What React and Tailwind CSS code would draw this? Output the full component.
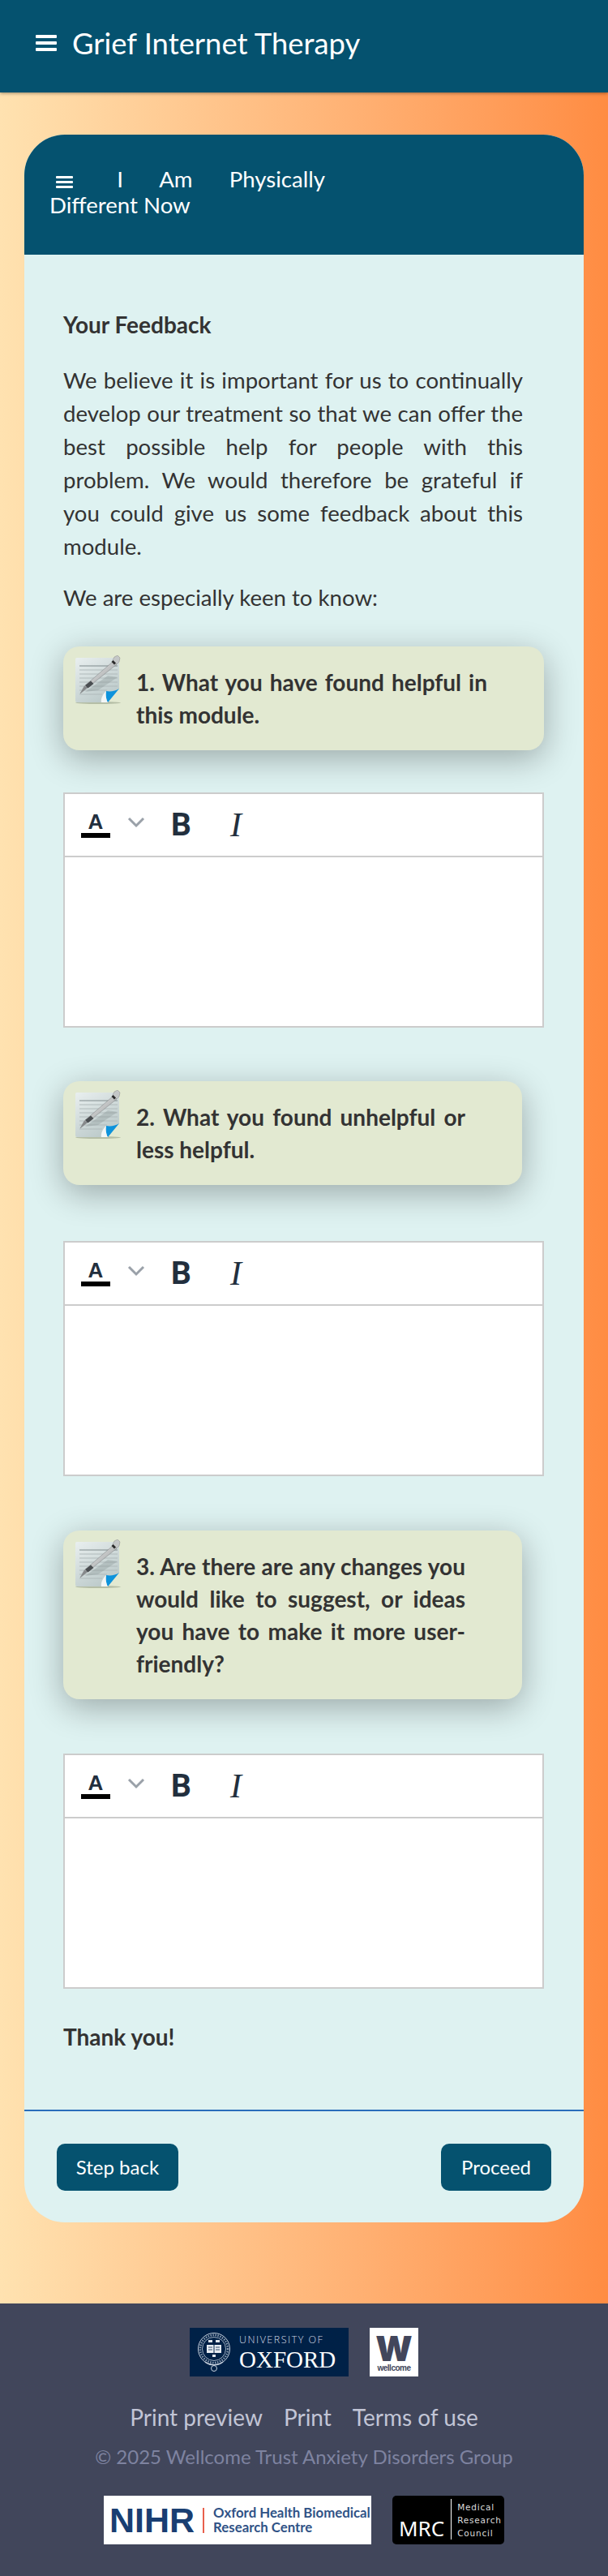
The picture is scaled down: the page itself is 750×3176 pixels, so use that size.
import React from "react";

function MenuIcon({ size = "w-[26px]", bar = "h-[4px]", gap = "gap-[4px]" }) {
    return (
        <span className={`inline-flex flex-col ${gap} ${size} align-middle`}>
            <span className={`${bar} bg-white rounded-[1px]`} />
            <span className={`${bar} bg-white rounded-[1px]`} />
            <span className={`${bar} bg-white rounded-[1px]`} />
        </span>
    );
}

// note page with a pen laid across it
function PencilIcon() {
    return (
        <svg width="56" height="61" viewBox="0 0 56 61" className="shrink-0">
            <defs>
                <linearGradient id="page" x1="0" y1="0" x2="0.6" y2="1">
                    <stop offset="0" stopColor="#e9efef" />
                    <stop offset="1" stopColor="#bccaca" />
                </linearGradient>
                <linearGradient id="pen" x1="0" y1="0" x2="1" y2="1">
                    <stop offset="0" stopColor="#f4f4f4" />
                    <stop offset="1" stopColor="#8d9192" />
                </linearGradient>
            </defs>
            <ellipse cx="28" cy="58.5" rx="28" ry="1.5" fill="#8f9a84" opacity="0.55" />
            <path d="M0 5a2 2 0 0 1 2-2h52v38L40 58H2a2 2 0 0 1-2-2z" fill="url(#page)" />
            <g stroke="#b0babb" strokeWidth="1">
                <path d="M5 13h47" stroke="#7f8a8c" />
                <path d="M5 18h47M5 23h47M5 28h47M5 33h47M5 38h47M5 43h34M5 48h28" />
            </g>
            <path d="M12 45L40 25l12 2-24 16z" fill="#7f8a8c" opacity="0.3" />
            <path d="M54 41L40 58c-2-3-3-10-2-14 5 1 12 0 16-3z" fill="#0d93dc" />
            <path d="M38 44c-1 4 0 11 2 14l-8 0c-1-4 2-11 6-14z" fill="#f2f6f6" />
            <path d="M6 47l5-9L47 7l4 4-35 28z" fill="url(#pen)" stroke="#6a6d6e" strokeWidth="0.4" />
            <path d="M6 47l5-9 5 1z" fill="#85888a" />
            <path d="M12 37l3.500 3.500 7-5.500-3.500-3.500z" fill="#4a4e51" />
            <path d="M48 2l4-2 3 3-1 5-3 3-5-5z" fill="#c4c7c7" stroke="#777" strokeWidth="0.4" />
            <path d="M44.500 8l3.500 3.500 2-2-3.500-3.500z" fill="#2a2a2a" />
        </svg>
    );
}

function Editor() {
    return (
        <div className="border-2 border-[#cccccc] bg-white h-[290px]">
            <div className="h-[78px] border-b-2 border-[#cccccc] flex items-center text-[#222f3e] pl-[20px]">
                <span className="w-[36px] flex flex-col items-center">
                    <span className="text-[26px] leading-[24px] font-bold" style={{ fontFamily: "'Liberation Sans', sans-serif" }}>A</span>
                    <span className="w-[36px] h-[6px] bg-black mt-[2px]" />
                </span>
                <svg width="22" height="14" viewBox="0 0 22 14" className="ml-[21px] -mt-[6px]">
                    <path d="M2 2l9 9 9-9" fill="none" stroke="#9aa1a9" strokeWidth="3" />
                </svg>
                <span className="ml-[32px] text-[39px] leading-none font-bold" style={{ fontFamily: "Roboto, sans-serif" }}>B</span>
                <span className="ml-[48px] text-[42px] leading-none italic" style={{ fontFamily: "'Liberation Serif', serif" }}>I</span>
            </div>
        </div>
    );
}

function Callout({ width, children }) {
    return (
        <div className={`${width} bg-[#e2e9d1] rounded-[20px] flex pl-[15px] pr-[70px] pt-[11px] pb-[24px] shadow-[0_10px_40px_rgba(0,0,0,0.3)]`}>
            <PencilIcon />
            <p className="ml-[19px] pt-[13px] text-[28px] leading-[40px] font-bold text-justify text-[#333333]">{children}</p>
        </div>
    );
}

function OxfordLogo() {
    return (
        <div className="w-[196px] h-[60px] bg-[#002147] flex items-center pl-[9px]">
            <svg width="42" height="52" viewBox="0 0 42 52" className="shrink-0">
                <circle cx="21" cy="22" r="19.5" fill="none" stroke="#c9d2de" strokeWidth="1" />
                <circle cx="21" cy="22" r="14.5" fill="none" stroke="#c9d2de" strokeWidth="0.8" />
                <circle cx="21" cy="22" r="17" fill="none" stroke="#c9d2de" strokeWidth="2.5" strokeDasharray="1.5 1.5" opacity="0.7" />
                <rect x="12" y="17" width="18" height="10" fill="#e6ebf1" />
                <path d="M21 17v10" stroke="#002147" strokeWidth="1" />
                <path d="M14 20h5M14 23h5M23 20h5M23 23h5" stroke="#002147" strokeWidth="0.8" />
                <path d="M14 11h5v3h-5zM23 11h5v3h-5zM19 29h4v3h-4z" fill="#dfe5ec" />
                <circle cx="21" cy="46" r="3.5" fill="none" stroke="#c9d2de" strokeWidth="1" />
                <path d="M10 38c6 5 16 5 22 0" fill="none" stroke="#c9d2de" strokeWidth="1.5" />
            </svg>
            <div className="ml-[10px] text-white" style={{ fontFamily: "'Liberation Serif', serif" }}>
                <div className="text-[12.5px] leading-[16px] tracking-[1.5px] text-[#d5dce6] whitespace-nowrap" style={{ fontFamily: "'Open Sans', sans-serif", fontWeight: 300 }}>UNIVERSITY OF</div>
                <div className="text-[29px] leading-[30px] mt-[1px]">OXFORD</div>
            </div>
        </div>
    );
}

function WellcomeLogo() {
    return (
        <div className="w-[60px] h-[60px] bg-white flex flex-col items-center text-[#42465b]">
            <span className="text-[42px] leading-[36px] mt-[8px] font-black" style={{ fontFamily: "Inter, sans-serif" }}>W</span>
            <span className="text-[10px] leading-[10px] mt-[1px] font-bold tracking-[-0.5px]" style={{ fontFamily: "'Liberation Sans', sans-serif" }}>wellcome</span>
        </div>
    );
}

function NihrLogo() {
    return (
        <div className="w-[330px] h-[60px] bg-white flex items-center pl-[7px]">
            <span className="text-[43px] leading-none font-bold text-[#193e72]" style={{ fontFamily: "'Liberation Sans', sans-serif" }}>NIHR</span>
            <span className="w-[2px] h-[31px] bg-[#e8604c] ml-[10px]" />
            <div className="ml-[11px] text-[16.8px] leading-[18px] font-bold text-[#2f5286] whitespace-nowrap">
                <div>Oxford Health Biomedical</div>
                <div>Research Centre</div>
            </div>
        </div>
    );
}

function MrcLogo() {
    return (
        <div className="w-[138px] h-[60px] bg-black rounded-[5px] flex items-end text-white pl-[8px] pb-[5px]">
            <span className="text-[26px] leading-[30px]" style={{ fontFamily: "'Noto Sans', sans-serif" }}>MRC</span>
            <span className="w-[1px] h-[50px] bg-white ml-[8px] self-center mt-[2px]" />
            <div className="ml-[7px] self-start mt-[6px] text-[10.5px] leading-[16px] tracking-[0.8px] text-[#dddddd]" style={{ fontFamily: "'DejaVu Sans', sans-serif" }}>
                <div>Medical</div>
                <div>Research</div>
                <div>Council</div>
            </div>
        </div>
    );
}

export default function App() {
    return (
        <div className="w-[750px] min-h-[3176px] flex flex-col bg-gradient-to-r from-[#ffe2b0] to-[#ff8c42]" style={{ fontFamily: "Lato, sans-serif" }}>
            <header className="h-[114px] bg-[#05526f] shadow-[0_1px_4px_rgba(0,0,0,0.4)] flex items-start pl-[44px] pt-[29px] text-white">
                <span className="mt-[14px] flex"><MenuIcon /></span>
                <h1 className="ml-[19px] text-[36.4px] leading-[48px]">Grief Internet Therapy</h1>
            </header>

            <main className="px-[30px] pt-[52px] pb-[100px]">
                <div className="bg-[#def2f1] rounded-[50px] overflow-hidden h-[2574px] flex flex-col">
                    <div className="h-[148px] bg-[#05526f] text-white pt-[39px] pl-[31px]">
                        <h2 className="w-[340px] text-[27.6px] leading-[32px]">
                            <span className="block text-justify [text-align-last:justify]">
                                <span className="inline-block ml-[8px] mr-[9px]"><MenuIcon size="w-[21px]" bar="h-[3px]" gap="gap-[3px]" /></span>{" "}
                                I Am Physically
                            </span>
                            <span className="block">Different Now</span>
                        </h2>
                    </div>

                    <div className="flex-1 pl-[48px] pr-[49px] pt-[66px] text-[#333333]">
                        <p className="text-[28px] leading-[40px] font-bold">Your Feedback</p>
                        <p className="mt-[28px] w-[567px] text-[27.6px] leading-[41px] text-justify">
                            We believe it is important for us to continually develop our treatment so that we can offer the best possible help for people with this problem. We would therefore be grateful if you could give us some feedback about this module.
                        </p>
                        <p className="mt-[22px] text-[27.6px] leading-[41px]">We are especially keen to know:</p>

                        <div className="mt-[40px]">
                            <Callout width="w-[593px]">1. What you have found helpful in this module.</Callout>
                        </div>
                        <div className="mt-[52px]"><Editor /></div>

                        <div className="mt-[66px]">
                            <Callout width="w-[566px]">2. What you found unhelpful or less helpful.</Callout>
                        </div>
                        <div className="mt-[69px]"><Editor /></div>

                        <div className="mt-[67px]">
                            <Callout width="w-[566px]">3. Are there are any changes you would like to suggest, or ideas you have to make it more user-friendly?</Callout>
                        </div>
                        <div className="mt-[67px]"><Editor /></div>

                        <p className="mt-[39px] text-[28px] leading-[40px] font-bold">Thank you!</p>
                    </div>

                    <div className="h-[139px] border-t-2 border-[#2a6ebb] flex justify-between items-start px-[40px] pt-[40px]">
                        <button className="w-[150px] h-[58px] bg-[#05526f] text-white rounded-[10px] text-[24px]">Step back</button>
                        <button className="w-[136px] h-[58px] bg-[#05526f] text-white rounded-[10px] text-[24px]">Proceed</button>
                    </div>
                </div>
            </main>

            <footer className="flex-1 bg-[#41465b] flex flex-col items-center pt-[30px]">
                <div className="flex gap-[26px]">
                    <OxfordLogo />
                    <WellcomeLogo />
                </div>
                <div className="mt-[28px] flex gap-[26px] text-[28px] leading-[44px] text-[#c2c5d6]">
                    <span>Print preview</span>
                    <span>Print</span>
                    <span>Terms of use</span>
                </div>
                <p className="mt-[7px] text-[24px] leading-[40px] text-[#7e83a0]">© 2025 Wellcome Trust Anxiety Disorders Group</p>
                <div className="mt-[28px] flex gap-[26px]">
                    <NihrLogo />
                    <MrcLogo />
                </div>
            </footer>
        </div>
    );
}
